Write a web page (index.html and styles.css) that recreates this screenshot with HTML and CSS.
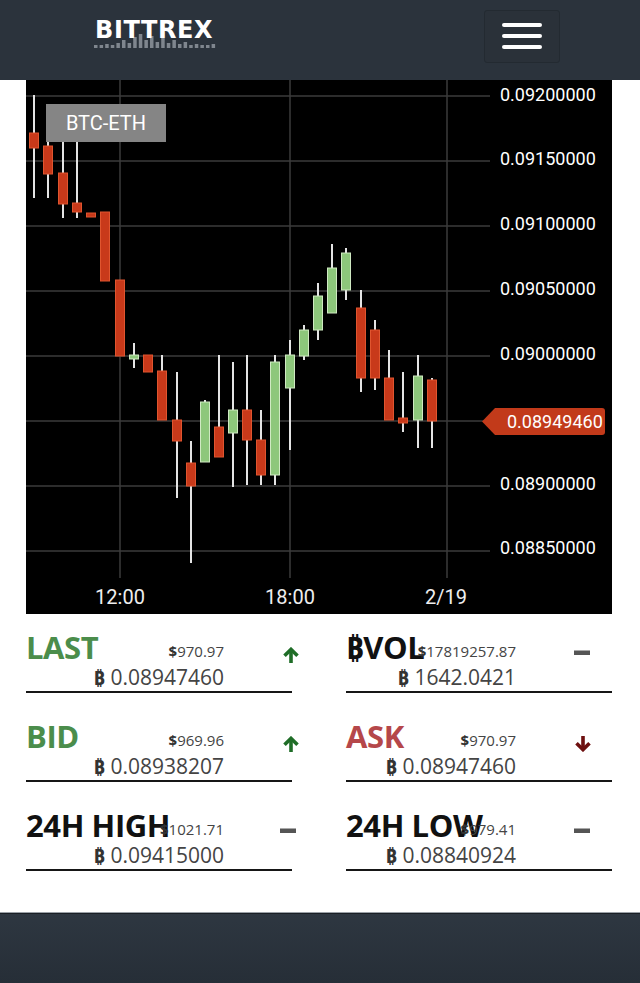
FILE: index.html
```html
<!DOCTYPE html>
<html lang="en">
<head>
<meta charset="utf-8">
<title>Bittrex BTC-ETH</title>
<link rel="stylesheet" href="styles.css">
</head>
<body>
<header class="topbar">
  <div class="logo">
    <svg class="logo-bars" width="124" height="14" viewBox="0 0 124 14">
      <g fill="#7f868e">
        <rect x="0" y="11" width="3.5" height="3"/>
        <rect x="5.6" y="11" width="3.5" height="3"/>
        <rect x="11.2" y="10" width="3.5" height="4"/>
        <rect x="16.8" y="11" width="3.5" height="3"/>
        <rect x="22.4" y="9" width="3.5" height="5"/>
        <rect x="28" y="6" width="3.5" height="8"/>
        <rect x="33.6" y="9" width="3.5" height="5"/>
        <rect x="39.2" y="3" width="3.5" height="11"/>
        <rect x="44.8" y="0" width="3.5" height="14"/>
        <rect x="50.4" y="6" width="3.5" height="8"/>
        <rect x="56" y="2" width="3.5" height="12"/>
        <rect x="61.6" y="8" width="3.5" height="6"/>
        <rect x="67.2" y="4" width="3.5" height="10"/>
        <rect x="72.8" y="9" width="3.5" height="5"/>
        <rect x="78.4" y="6" width="3.5" height="8"/>
        <rect x="84" y="10" width="3.5" height="4"/>
        <rect x="89.6" y="8" width="3.5" height="6"/>
        <rect x="95.2" y="11" width="3.5" height="3"/>
        <rect x="100.8" y="10" width="3.5" height="4"/>
        <rect x="106.4" y="11" width="3.5" height="3"/>
        <rect x="112" y="11" width="3.5" height="3"/>
        <rect x="117.6" y="10" width="3.5" height="4"/>
      </g>
    </svg>
    <span class="logo-text">BITTREX</span>
  </div>
  <button class="menu-btn" type="button" aria-label="Menu">
    <span class="bar"></span><span class="bar"></span><span class="bar"></span>
  </button>
</header>

<main>
  <div class="chart">
    <svg width="586" height="534" viewBox="26 80 586 534">
      <rect x="26" y="80" width="586" height="534" fill="#000"/>
      <g stroke="#3b3b3b" stroke-width="1.5">
        <line x1="26" y1="96" x2="490" y2="96"/>
        <line x1="26" y1="161" x2="490" y2="161"/>
        <line x1="26" y1="226" x2="490" y2="226"/>
        <line x1="26" y1="291" x2="490" y2="291"/>
        <line x1="26" y1="356" x2="490" y2="356"/>
        <line x1="26" y1="421" x2="490" y2="421"/>
        <line x1="26" y1="486" x2="490" y2="486"/>
        <line x1="26" y1="551" x2="490" y2="551"/>
        <line x1="120" y1="80" x2="120" y2="578"/>
        <line x1="290" y1="80" x2="290" y2="578"/>
        <line x1="447" y1="80" x2="447" y2="578"/>
      </g>
      <g stroke="#e4e4e4" stroke-width="2">
        <line x1="34" y1="95" x2="34" y2="198"/>
        <line x1="48" y1="130" x2="48" y2="198"/>
        <line x1="63" y1="135" x2="63" y2="218"/>
        <line x1="77" y1="135" x2="77" y2="218"/>
        <line x1="134" y1="343" x2="134" y2="368"/>
        <line x1="162" y1="355" x2="162" y2="420"/>
        <line x1="177" y1="372" x2="177" y2="498"/>
        <line x1="191" y1="441" x2="191" y2="563"/>
        <line x1="205" y1="400" x2="205" y2="462"/>
        <line x1="219" y1="355" x2="219" y2="457"/>
        <line x1="233" y1="362" x2="233" y2="487"/>
        <line x1="247" y1="355" x2="247" y2="485"/>
        <line x1="261" y1="410" x2="261" y2="485"/>
        <line x1="275" y1="355" x2="275" y2="485"/>
        <line x1="290" y1="340" x2="290" y2="450"/>
        <line x1="304" y1="325" x2="304" y2="360"/>
        <line x1="318" y1="283" x2="318" y2="340"/>
        <line x1="332" y1="244" x2="332" y2="313"/>
        <line x1="346" y1="248" x2="346" y2="300"/>
        <line x1="361" y1="290" x2="361" y2="392"/>
        <line x1="375" y1="320" x2="375" y2="390"/>
        <line x1="389" y1="350" x2="389" y2="420"/>
        <line x1="403" y1="372" x2="403" y2="432"/>
        <line x1="418" y1="355" x2="418" y2="448"/>
        <line x1="432" y1="378" x2="432" y2="448"/>
      </g>
      <g fill="#c8391a" stroke="#e0552f" stroke-width="1">
        <rect x="29.5" y="133" width="9" height="15"/>
        <rect x="43.5" y="146" width="9" height="28"/>
        <rect x="58.5" y="173" width="9" height="31"/>
        <rect x="72.5" y="203" width="9" height="9"/>
        <rect x="86.5" y="213" width="9" height="4"/>
        <rect x="100.5" y="212" width="9" height="69"/>
        <rect x="115.5" y="280" width="9" height="76"/>
        <rect x="143.5" y="355" width="9" height="17"/>
        <rect x="157.5" y="371" width="9" height="49"/>
        <rect x="172.5" y="420" width="9" height="21"/>
        <rect x="186.5" y="463" width="9" height="23"/>
        <rect x="214.5" y="427" width="9" height="30"/>
        <rect x="242.5" y="410" width="9" height="30"/>
        <rect x="256.5" y="440" width="9" height="35"/>
        <rect x="356.5" y="308" width="9" height="70"/>
        <rect x="370.5" y="330" width="9" height="48"/>
        <rect x="384.5" y="378" width="9" height="42"/>
        <rect x="398.5" y="418" width="9" height="5"/>
        <rect x="427.5" y="380" width="9" height="41"/>
      </g>
      <g fill="#8dc77b" stroke="#cfe9c2" stroke-width="1">
        <rect x="129.5" y="355" width="9" height="4"/>
        <rect x="200.5" y="402" width="9" height="60"/>
        <rect x="228.5" y="410" width="9" height="23"/>
        <rect x="270.5" y="362" width="9" height="113"/>
        <rect x="285.5" y="355" width="9" height="33"/>
        <rect x="299.5" y="330" width="9" height="26"/>
        <rect x="313.5" y="296" width="9" height="34"/>
        <rect x="327.5" y="268" width="9" height="45"/>
        <rect x="341.5" y="253" width="9" height="37"/>
        <rect x="413.5" y="376" width="9" height="44"/>
      </g>
      <g class="axis-y" fill="#ffffff">
        <text x="500" y="101">0.09200000</text>
        <text x="500" y="165">0.09150000</text>
        <text x="500" y="230">0.09100000</text>
        <text x="500" y="295">0.09050000</text>
        <text x="500" y="360">0.09000000</text>
        <text x="500" y="490">0.08900000</text>
        <text x="500" y="554">0.08850000</text>
      </g>
      <path d="M482 421.5 L495 408 H602 Q605 408 605 411 V432 Q605 435 602 435 H495 Z" fill="#c23a1a"/>
      <text class="axis-y" x="507" y="428" fill="#ffffff">0.08949460</text>
      <g class="axis-x" fill="#eeeeee" text-anchor="middle">
        <text x="120" y="604">12:00</text>
        <text x="290" y="604">18:00</text>
        <text x="446" y="604">2/19</text>
      </g>
      <rect x="46" y="104" width="120" height="38" fill="#858585"/>
      <text class="pair" x="106" y="130" fill="#ffffff" text-anchor="middle">BTC-ETH</text>
    </svg>
  </div>

  <section class="stats">
    <div class="stat stat-l">
      <div class="stat-label green">LAST</div>
      <div class="stat-vals">
        <div class="usd"><b>$</b>970.97</div>
        <div class="btc"><span class="sym">₿</span> 0.08947460</div>
      </div>
      <svg class="stat-icon up" width="18" height="16" viewBox="0 0 18 16"><g fill="none" stroke="#1f6d27" stroke-width="3.6"><polyline points="2.5,8.8 9,2.4 15.5,8.8"/><line x1="9" y1="3" x2="9" y2="16"/></g></svg>
    </div>
    <div class="stat stat-r">
      <div class="stat-label"><span class="sym">₿</span>VOL</div>
      <div class="stat-vals">
        <div class="usd"><b>$</b>17819257.87</div>
        <div class="btc"><span class="sym">₿</span> 1642.0421</div>
      </div>
      <svg class="stat-icon flat" width="18" height="16" viewBox="0 0 18 16"><rect x="1" y="3.5" width="16" height="4.5" fill="#555"/></svg>
    </div>

    <div class="stat stat-l">
      <div class="stat-label green">BID</div>
      <div class="stat-vals">
        <div class="usd"><b>$</b>969.96</div>
        <div class="btc"><span class="sym">₿</span> 0.08938207</div>
      </div>
      <svg class="stat-icon up" width="18" height="16" viewBox="0 0 18 16"><g fill="none" stroke="#1f6d27" stroke-width="3.6"><polyline points="2.5,8.8 9,2.4 15.5,8.8"/><line x1="9" y1="3" x2="9" y2="16"/></g></svg>
    </div>
    <div class="stat stat-r">
      <div class="stat-label red">ASK</div>
      <div class="stat-vals">
        <div class="usd"><b>$</b>970.97</div>
        <div class="btc"><span class="sym">₿</span> 0.08947460</div>
      </div>
      <svg class="stat-icon down" width="18" height="16" viewBox="0 0 18 16"><g fill="none" stroke="#6e1010" stroke-width="3.6"><polyline points="2.5,7.2 9,13.6 15.5,7.2"/><line x1="9" y1="0" x2="9" y2="13"/></g></svg>
    </div>

    <div class="stat stat-l">
      <div class="stat-label">24H HIGH</div>
      <div class="stat-vals">
        <div class="usd"><b>$</b>1021.71</div>
        <div class="btc"><span class="sym">₿</span> 0.09415000</div>
      </div>
      <svg class="stat-icon flat" width="18" height="16" viewBox="0 0 18 16"><rect x="1" y="3.5" width="16" height="4.5" fill="#555"/></svg>
    </div>
    <div class="stat stat-r">
      <div class="stat-label">24H LOW</div>
      <div class="stat-vals">
        <div class="usd"><b>$</b>979.41</div>
        <div class="btc"><span class="sym">₿</span> 0.08840924</div>
      </div>
      <svg class="stat-icon flat" width="18" height="16" viewBox="0 0 18 16"><rect x="1" y="3.5" width="16" height="4.5" fill="#555"/></svg>
    </div>
  </section>
</main>

<footer class="bottom"></footer>
</body>
</html>
```

FILE: styles.css
```css
* { box-sizing: border-box; }

html, body {
  margin: 0;
  padding: 0;
  background: #ffffff;
  font-family: "Open Sans", "DejaVu Sans", sans-serif;
  overflow: hidden;
}

.topbar {
  height: 80px;
  background: #2b333c;
  display: flex;
  align-items: flex-start;
}

.logo {
  display: grid;
  grid-template-areas: "logo";
  margin: 16px 0 0 94px;
}

.logo > * {
  grid-area: logo;
}

.logo-bars {
  margin-top: 18px;
  display: block;
}

.logo-text {
  font-family: "DejaVu Sans", sans-serif;
  font-weight: 700;
  font-size: 24px;
  line-height: 28px;
  color: #ffffff;
  letter-spacing: 0.6px;
  padding-left: 1px;
}

.menu-btn {
  margin: 10px 80px 0 auto;
  width: 76px;
  height: 53px;
  background: #2a3139;
  border: 1px solid #232a31;
  border-radius: 3px;
  padding: 12px 0 0 0;
  display: flex;
  flex-direction: column;
  align-items: center;
  gap: 7px;
}

.menu-btn .bar {
  display: block;
  width: 40px;
  height: 4px;
  border-radius: 2px;
  background: #ffffff;
}

.chart {
  margin-left: 26px;
  width: 586px;
  height: 534px;
}

.chart svg {
  display: block;
}

.axis-y {
  font-family: Roboto, "DejaVu Sans", sans-serif;
  font-size: 18px;
}

.axis-x {
  font-family: Roboto, "DejaVu Sans", sans-serif;
  font-size: 20px;
}

.pair {
  font-family: Roboto, "DejaVu Sans", sans-serif;
  font-size: 20px;
}

.stats {
  display: grid;
  grid-template-columns: 266px 266px;
  column-gap: 54px;
  row-gap: 23px;
  padding: 13px 0 41px 26px;
  background: #ffffff;
}

.stat {
  display: grid;
  grid-template-areas: "s";
  height: 66px;
  border-bottom: 2px solid #161616;
}

.stat > * {
  grid-area: s;
}

.stat-label {
  justify-self: start;
  align-self: start;
  margin-top: 2px;
  font-weight: 700;
  font-size: 31px;
  line-height: 36px;
  letter-spacing: -0.4px;
  color: #111111;
}

.stat-label.green { color: #4b8d4b; }
.stat-label.red { color: #b5474a; }

.stat-label .sym {
  font-family: "Noto Sans", "DejaVu Sans", sans-serif;
  font-weight: 700;
}

.stat-vals {
  justify-self: end;
  align-self: start;
  text-align: right;
  margin-top: 15px;
}

.stat-l .stat-vals { margin-right: 68px; }
.stat-r .stat-vals { margin-right: 96px; }

.usd {
  font-size: 15px;
  line-height: 18px;
  color: #444444;
}

.usd b {
  font-weight: 700;
  color: #333333;
}

.btc {
  margin-top: 5px;
  font-size: 21px;
  line-height: 24px;
  color: #444444;
}

.btc .sym {
  font-family: "Noto Sans", "DejaVu Sans", sans-serif;
  font-weight: 700;
  color: #333333;
  font-size: 20px;
}

.stat-icon {
  justify-self: end;
  align-self: start;
  margin-top: 20px;
  display: block;
}

.stat-l .up { margin-right: -8px; }
.stat-l .flat { margin-right: -5px; }
.stat-r .flat { margin-right: 21px; }
.stat-r .down { margin-right: 20px; }

.bottom {
  height: 71px;
  border-top: 1px solid #9ba1a7;
  background: linear-gradient(#2e3741, #262e37);
  box-shadow: inset 0 1px 0 #1a1f25;
}
```
